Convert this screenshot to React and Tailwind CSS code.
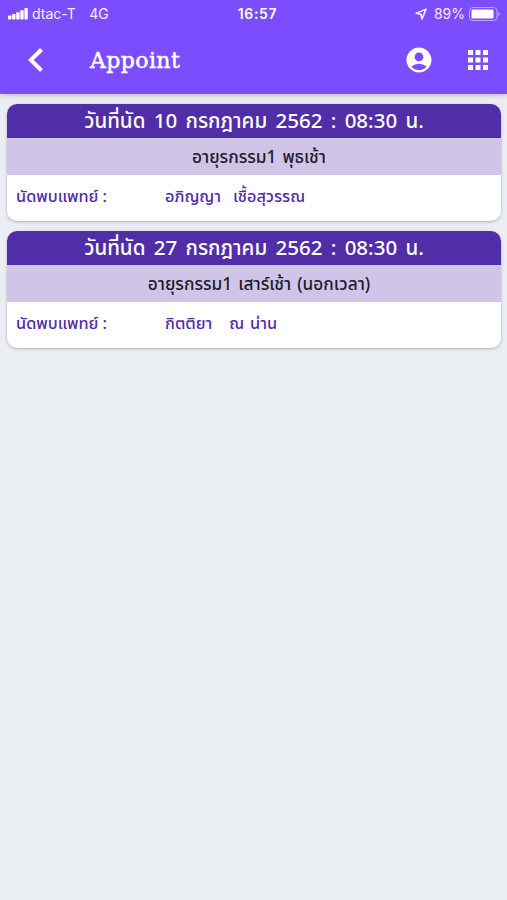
import React from "react";
import { MdAccountCircle, MdApps } from "react-icons/md";

const appointments = [
  {
    date: "วันที่นัด 10 กรกฎาคม 2562 : 08:30 น.",
    clinic: "อายุรกรรม1 พุธเช้า",
    firstName: "อภิญญา",
    lastName: "เชื้อสุวรรณ",
    gap: "gap-[12px]",
  },
  {
    date: "วันที่นัด 27 กรกฎาคม 2562 : 08:30 น.",
    clinic: "อายุรกรรม1 เสาร์เช้า (นอกเวลา)",
    firstName: "กิตติยา",
    lastName: "ณ น่าน",
    gap: "gap-[17px]",
  },
];

const StatusBar = () => (
  <div className="relative flex h-7 items-center justify-between pl-2 pr-[7px] font-['Inter',sans-serif] text-[14px] leading-none text-white/90">
    <div className="flex items-center">
      <svg width="20" height="12" viewBox="0 0 20 12" fill="#fff">
        <rect x="0" y="7.5" width="3.4" height="4" rx="0.8" />
        <rect x="4.1" y="6" width="3.4" height="5.5" rx="0.8" />
        <rect x="8.2" y="4.2" width="3.4" height="7.3" rx="0.8" />
        <rect x="12.3" y="2.3" width="3.4" height="9.2" rx="0.8" />
        <rect x="16.4" y="0" width="3.4" height="11.5" rx="0.8" />
      </svg>
      <span className="ml-[4px]">dtac-T</span>
      <span className="ml-[13.5px]">4G</span>
    </div>
    <span className="absolute left-1/2 ml-[4px] -translate-x-1/2 font-semibold tracking-[0.7px] text-white">
      16:57
    </span>
    <div className="flex items-center">
      <svg
        width="12"
        height="12"
        viewBox="0 0 13 13"
        fill="none"
        stroke="currentColor"
        strokeWidth="1.7"
        strokeLinejoin="round"
      >
        <path d="M12 1.200 1.200 5.800 6.500 6.900 7.500 12Z" />
      </svg>
      <span className="ml-[7px]">89%</span>
      <svg className="ml-1" width="31" height="14" viewBox="0 0 31 14">
        <rect x="0.5" y="0.5" width="27.5" height="13" rx="3.5" fill="none" stroke="#fff" strokeOpacity="0.5" />
        <rect x="2.5" y="2.5" width="22" height="9" rx="1.2" fill="#fff" />
        <path d="M29.3 5v4c.9-.4 1.3-1.1 1.3-2s-.4-1.600-1.300-2Z" fill="#fff" fillOpacity="0.5" />
      </svg>
    </div>
  </div>
);

const Header = () => (
  <header className="h-[94px] bg-[#7c4dff] text-white shadow-[0_1px_5px_rgba(0,0,0,0.22)]">
    <StatusBar />
    <nav className="flex h-[63px] items-center pl-7 pr-[14px]">
      <button aria-label="Back">
        <svg width="16" height="26" viewBox="0 0 16 26" fill="none" stroke="currentColor" strokeWidth="4">
          <path d="M13.500 2.500 2.800 13 13.500 23.500" />
        </svg>
      </button>
      <h1 className="ml-[46px] pt-[2px] font-['DejaVu_Serif',serif] text-[22px] tracking-[0.4px] [-webkit-text-stroke:0.5px_white]">
        Appoint
      </h1>
      <button className="ml-auto" aria-label="Account">
        <MdAccountCircle size={30} />
      </button>
      <button className="ml-[29px]" aria-label="Menu">
        <MdApps size={30} />
      </button>
    </nav>
  </header>
);

const AppointmentCard = ({ item }) => (
  <article className="h-[117px] overflow-hidden rounded-[10px] bg-white shadow-[0_1px_3px_rgba(0,0,0,0.25)]">
    <h2 className="flex h-[34px] items-center justify-center whitespace-pre bg-[#512da8] pb-[2px] text-[20.5px] font-medium text-white [word-spacing:3px]">
      {item.date}
    </h2>
    <p className="flex h-[37px] items-center justify-center whitespace-pre bg-[#d1c4e9] pl-[10px] text-[17.3px] font-medium text-[#211b2c] [word-spacing:1.5px]">
      {item.clinic}
    </p>
    <div className="flex h-[43px] items-center whitespace-pre pl-[9px] text-[16.3px] font-medium text-[#512da8]">
      <span className="w-[149px]">นัดพบแพทย์ :</span>
      <span className={`flex ${item.gap}`}>
        <span>{item.firstName}</span>
        <span className="[word-spacing:1.5px]">{item.lastName}</span>
      </span>
    </div>
  </article>
);

const App = () => (
  <div className="min-h-screen bg-[#eaeef2] font-['Noto_Sans','Noto_Sans_Thai',sans-serif]">
    <Header />
    <main className="flex flex-col gap-[10px] pl-[7px] pr-[6px] pt-[10px]">
      {appointments.map((item) => (
        <AppointmentCard key={item.date} item={item} />
      ))}
    </main>
  </div>
);

export default App;
